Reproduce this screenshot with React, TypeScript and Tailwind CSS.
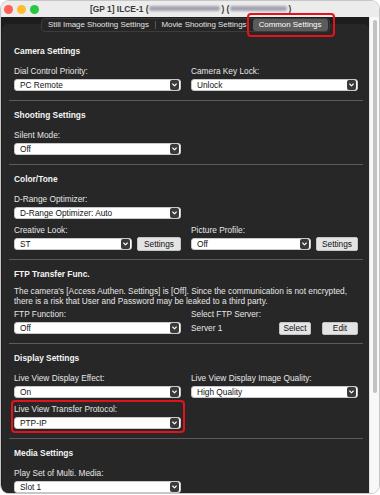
function Chevron() {
  return (
    <span className="ml-auto flex h-[10px] w-[9px] items-center justify-center rounded-[2px] bg-[#3a3a3a]">
      <svg width="5" height="4" viewBox="0 0 5 4" fill="none">
        <path d="M0.7 1 L2.5 2.9 L4.3 1" stroke="#ffffff" strokeWidth="1.1" strokeLinecap="round" strokeLinejoin="round" />
      </svg>
    </span>
  );
}

function Select({ value, className = "" }: { value: string; className?: string }) {
  return (
    <div className={`flex h-[12px] items-center rounded-[3px] border border-[#c9c9c9] bg-white pl-[5px] pr-px text-[8.3px] leading-none text-[#111] ${className}`}>
      <span>{value}</span>
      <Chevron />
    </div>
  );
}

function Button({ label, className = "" }: { label: string; className?: string }) {
  return (
    <div className={`flex h-[13px] items-center justify-center rounded-[2px] border border-[#c4c4c4] bg-[#e4e4e4] text-[8.3px] leading-none text-[#111] ${className}`}>
      {label}
    </div>
  );
}

function Label({ text }: { text: string }) {
  return <div className="h-[12px] text-[8.3px] leading-[12px] text-[#e6e6e6]">{text}</div>;
}

function Heading({ text }: { text: string }) {
  return <div className="h-[12px] text-[8.4px] font-bold leading-[12px] text-[#f4f4f4]">{text}</div>;
}

function Field({ label, value }: { label: string; value: string }) {
  return (
    <div className="flex flex-col gap-[2px]">
      <Label text={label} />
      <Select value={value} />
    </div>
  );
}

function Separator() {
  return <div className="-mx-[5px] mb-[8px] mt-[9px] h-px bg-[#5b5b5b]" />;
}

export default function App() {
  return (
    <div className="h-[495px] w-[380px] overflow-hidden bg-white font-['Liberation_Sans',sans-serif]">
      <div className="flex h-[494px] w-[380px] flex-col overflow-hidden rounded-[9px] border border-[#c6c6c6]">
        {/* title bar */}
        <div className="flex h-[16px] shrink-0 items-center bg-[#ececec] px-[3px]">
          <div className="flex w-[60px] items-center gap-[4px]">
            <span className="h-[9px] w-[9px] rounded-full bg-[#fe5f57]" />
            <span className="h-[9px] w-[9px] rounded-full bg-[#febc2e]" />
            <span className="h-[9px] w-[9px] rounded-full bg-[#28c840]" />
          </div>
          <div className="ml-[26px] flex items-center text-[8.4px] font-bold text-[#3a3a3a]">
            <span>[GP 1] ILCE-1 (</span>
            <span className="mx-[1px] inline-block h-[5px] w-[71px] rounded-[2px] bg-[#9c9cab] opacity-90 blur-[1px]" />
            <span>) (</span>
            <span className="mx-[1px] inline-block h-[5px] w-[57px] rounded-[2px] bg-[#9c9cab] opacity-90 blur-[1px]" />
            <span>)</span>
          </div>
        </div>

        <div className="flex flex-1">
          {/* main */}
          <div className="flex w-[368px] flex-col bg-[#1d1d1d]">
            <div className="relative z-10 mt-[1px] flex justify-center pl-[2px] pr-[2px]">
              <div className="flex h-[14px] items-center rounded-[4px] border border-[#3c3c3c] bg-[#262626] pl-px pr-[1px] text-[7.9px] leading-none text-[#e2e2e2]">
                <span className="w-[112px] text-center">Still Image Shooting Settings</span>
                <span className="h-[8px] w-px bg-[#555]" />
                <span className="w-[97px] text-center">Movie Shooting Settings</span>
                <div className="relative">
                  <div className="flex h-[12px] w-[75px] items-center justify-center rounded-[3px] bg-[#5c5c5c] text-white">Common Settings</div>
                  <div className="absolute -bottom-[6px] -left-[6px] -right-[7px] -top-[6px] rounded-[4px] border-2 border-[#e3121c]" />
                </div>
              </div>
            </div>

            <div className="-mt-[8px] ml-[1px] flex-1 rounded-t-[6px] bg-[#272727] pl-[12px] pr-[10px] pt-[21px]">
              <div className="w-[344px]">
                <Heading text="Camera Settings" />
                <div className="mt-[8px] grid grid-cols-2 gap-x-[10px]">
                  <Field label="Dial Control Priority:" value="PC Remote" />
                  <Field label="Camera Key Lock:" value="Unlock" />
                </div>
                <Separator />

                <Heading text="Shooting Settings" />
                <div className="mt-[8px] grid grid-cols-2 gap-x-[10px]">
                  <Field label="Silent Mode:" value="Off" />
                </div>
                <Separator />

                <Heading text="Color/Tone" />
                <div className="mt-[8px] grid grid-cols-2 gap-x-[10px]">
                  <Field label="D-Range Optimizer:" value="D-Range Optimizer: Auto" />
                </div>
                <div className="mt-[5px] grid grid-cols-2 gap-x-[10px]">
                  <div className="flex flex-col gap-[2px]">
                    <Label text="Creative Look:" />
                    <div className="flex h-[12px] items-center gap-[5px]">
                      <Select value="ST" className="flex-1" />
                      <Button label="Settings" className="h-[14px] w-[44px]" />
                    </div>
                  </div>
                  <div className="flex flex-col gap-[2px]">
                    <Label text="Picture Profile:" />
                    <div className="flex h-[12px] items-center gap-[5px]">
                      <Select value="Off" className="flex-1" />
                      <Button label="Settings" className="h-[14px] w-[42px]" />
                    </div>
                  </div>
                </div>
                <Separator />

                <Heading text="FTP Transfer Func." />
                <p className="mt-[6px] text-[8.3px] leading-[10px] text-[#e6e6e6]">
                  The camera's [Access Authen. Settings] is [Off]. Since the communication is not encrypted, there is a risk that User and Password may be leaked to a third party.
                </p>
                <div className="mt-[2px] grid grid-cols-2 gap-x-[10px]">
                  <Field label="FTP Function:" value="Off" />
                  <div className="flex flex-col gap-[2px]">
                    <Label text="Select FTP Server:" />
                    <div className="flex h-[12px] items-center text-[8.3px] text-[#e6e6e6]">
                      <span>Server 1</span>
                      <Button label="Select" className="ml-auto w-[32px]" />
                      <Button label="Edit" className="ml-[11px] w-[36px]" />
                    </div>
                  </div>
                </div>
                <Separator />

                <Heading text="Display Settings" />
                <div className="mt-[8px] grid grid-cols-2 gap-x-[10px]">
                  <Field label="Live View Display Effect:" value="On" />
                  <Field label="Live View Display Image Quality:" value="High Quality" />
                </div>
                <div className="mt-[5px] grid grid-cols-2 gap-x-[10px]">
                  <div className="relative">
                    <Field label="Live View Transfer Protocol:" value="PTP-IP" />
                    <div className="absolute -bottom-[4px] -left-[3px] -right-[4px] -top-[3px] rounded-[4px] border-2 border-[#e3121c]" />
                  </div>
                </div>
                <Separator />

                <Heading text="Media Settings" />
                <div className="mt-[8px] grid grid-cols-2 gap-x-[10px]">
                  <Field label="Play Set of Multi. Media:" value="Slot 1" />
                </div>
              </div>
            </div>
          </div>

          {/* scrollbar */}
          <div className="flex flex-1 justify-center border-l border-[#e2e2e2] bg-[#f8f8f8] pt-[3px]">
            <div className="h-[373px] w-[4px] rounded-full bg-[#c2c2c2]" />
          </div>
        </div>
      </div>
    </div>
  );
}
